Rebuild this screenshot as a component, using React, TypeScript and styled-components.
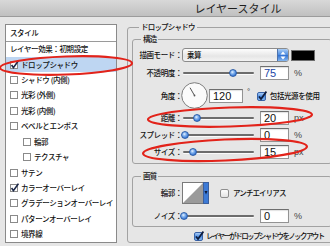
import React from "react";
import styled, { createGlobalStyle } from "styled-components";

const GlobalStyle = createGlobalStyle`
  * { box-sizing: border-box; }
  html, body { margin: 0; padding: 0; background: #e6e6e6; }
  body {
    font-family: "Noto Sans CJK JP", "Noto Sans", sans-serif;
    font-weight: 500;
    color: #111;
  }
`;

const Window = styled.div`
  position: relative;
  width: 330px;
  height: 246px;
  overflow: hidden;
  display: flex;
  flex-direction: column;
  background: #e6e6e6;
`;

const TitleBar = styled.div`
  flex: none;
  height: 17px;
  display: flex;
  align-items: center;
  justify-content: center;
  padding-left: 146px;
  background: linear-gradient(#d8d8d8, #c0c0c0);
  border-bottom: 1px solid #9c9c9c;
  font-size: 11px;
  font-weight: 400;
  line-height: 14px;
  color: #1e1e1e;
`;

const Body = styled.div`
  display: flex;
  align-items: flex-start;
  padding: 5px 0 0 5px;
`;

/* left: effect list */
const StylePanel = styled.div`
  flex: none;
  width: 112px;
  height: 219px;
  margin-top: 2px;
  display: flex;
  flex-direction: column;
  background: #fff;
  border: 1px solid #8a8a8a;
  font-size: 7.5px;
  line-height: 10px;
  letter-spacing: -0.4px;
`;

const PanelHeader = styled.div`
  height: 17px;
  display: flex;
  align-items: center;
  padding-left: 4px;
  border-bottom: 1px solid #9a9a9a;
`;

const PresetRow = styled.div`
  height: 15px;
  display: flex;
  align-items: center;
  padding-left: 4px;
`;

const EffectRow = styled.div<{ $indent?: boolean; $selected?: boolean }>`
  height: 15.5px;
  display: flex;
  align-items: center;
  gap: 2px;
  padding-left: ${(p) => (p.$indent ? 17 : 4)}px;
  background: ${(p) => (p.$selected ? "#bed6f2" : "transparent")};
  white-space: nowrap;
`;

/* right: settings */
const Group = styled.fieldset<{ $w: number; $ml?: number; $mt?: number; $h?: number; $pb?: number; $pl?: number }>`
  flex: none;
  width: ${(p) => p.$w}px;
  height: ${(p) => (p.$h ? `${p.$h}px` : "auto")};
  min-width: 0;
  margin: ${(p) => p.$mt ?? 0}px 0 0 ${(p) => p.$ml ?? 0}px;
  padding: 0 0 ${(p) => p.$pb ?? 0}px ${(p) => p.$pl ?? 0}px;
  border: 1px solid #a2a2a2;
  border-radius: 3px;
`;

const Legend = styled.legend<{ $ml: number }>`
  margin-left: ${(p) => p.$ml}px;
  padding: 0 2px;
  font-size: 7.5px;
  line-height: 10px;
  letter-spacing: -0.8px;
`;

const FieldRow = styled.div<{ $h?: number; $mt?: number; $ml?: number }>`
  display: flex;
  align-items: center;
  height: ${(p) => p.$h ?? 14}px;
  margin-top: ${(p) => p.$mt ?? 3}px;
  margin-left: ${(p) => p.$ml ?? 0}px;
  font-size: 7.5px;
  line-height: 10px;
  letter-spacing: -0.4px;
  white-space: nowrap;
`;

const FieldLabel = styled.span`
  flex: none;
  width: 49px;
  text-align: right;
`;

const ModeSelect = styled.div`
  flex: none;
  display: flex;
  align-items: center;
  width: 107px;
  height: 14px;
  padding-left: 4px;
  overflow: hidden;
  border: 1px solid #8b8b8b;
  border-radius: 3px;
  background: linear-gradient(#fdfdfd, #e6e6e6 60%, #f3f3f3);
`;

const Stepper = styled.span`
  margin-left: auto;
  width: 11px;
  height: 100%;
  display: flex;
  align-items: center;
  justify-content: center;
  background: linear-gradient(#a9cdf6, #4a8ae0 50%, #2e6fd2 51%, #86b8f0);
  border-left: 1px solid #4d73ad;
`;

const Swatch = styled.span`
  flex: none;
  width: 24px;
  height: 11px;
  margin-left: 2px;
  background: #000;
  border: 1px solid #6d6d6d;
`;

const Slider = styled.div<{ $ml?: number }>`
  position: relative;
  flex: none;
  width: 71px;
  height: 10px;
  margin-left: ${(p) => p.$ml ?? 1}px;

  &::before {
    content: "";
    position: absolute;
    left: 0;
    right: 0;
    top: 4px;
    height: 2px;
    border-radius: 1px;
    background: #6c6c6c;
    box-shadow: 0 1px 0 #fafafa;
  }
`;

const Thumb = styled.span<{ $pos: number }>`
  position: absolute;
  top: 1px;
  left: ${(p) => p.$pos}px;
  width: 8px;
  height: 8px;
  margin-left: -4px;
  border-radius: 50%;
  border: 1px solid #2d5ea8;
  background: radial-gradient(circle at 40% 35%, #e6f1ff 0, #7fb1ee 35%, #2f6fd0 80%);
`;

const NumberBox = styled.div<{ $w?: number; $ml?: number; $accent?: boolean }>`
  flex: none;
  width: ${(p) => p.$w ?? 29}px;
  height: 14px;
  margin-left: ${(p) => p.$ml ?? 6}px;
  padding-left: 3px;
  border: 1px solid #939393;
  border-top-color: #6e6e6e;
  background: #fff;
  box-shadow: inset 0 1px 1px rgba(0, 0, 0, 0.12);
  font: 400 11px/12px "Liberation Sans", Arial, sans-serif;
  letter-spacing: 0;
  color: ${(p) => (p.$accent ? "#2146a6" : "#111")};
`;

const Unit = styled.span<{ $ml?: number }>`
  margin-left: ${(p) => p.$ml ?? 5}px;
  font: 400 9px/10px "Liberation Sans", Arial, sans-serif;
  letter-spacing: 0;
  color: #444;
`;

const Degree = styled.span`
  align-self: flex-start;
  margin: 6px 0 0 4px;
  font: 400 8px/8px "Liberation Sans", Arial, sans-serif;
  color: #333;
`;

const CheckText = styled.span<{ $ml?: number; $tight?: number }>`
  margin-left: ${(p) => p.$ml ?? 3}px;
  letter-spacing: ${(p) => p.$tight ?? -0.4}px;
`;

const Overlay = styled.svg`
  position: absolute;
  left: 0;
  top: 0;
  pointer-events: none;
`;

const ListCheck = ({ checked }: { checked?: boolean }) => (
  <svg width="9" height="10" viewBox="0 0 9 10" style={{ flex: "none" }}>
    <rect x="0.5" y="1.5" width="7" height="7" fill="#fff" stroke="#8a8a8a" />
    {checked && <path d="M1.6 5 L3.4 7.6 L8.4 0.6" fill="none" stroke="#1b2747" strokeWidth="1.6" />}
  </svg>
);

const AquaCheck = ({ checked }: { checked?: boolean }) => (
  <svg width="10" height="10" viewBox="0 0 10 10" style={{ flex: "none" }}>
    <defs>
      <linearGradient id="aqOn" x1="0" y1="0" x2="0" y2="1">
        <stop offset="0" stopColor="#b7d6fa" />
        <stop offset="0.5" stopColor="#4f8fe3" />
        <stop offset="1" stopColor="#8bbcf2" />
      </linearGradient>
      <linearGradient id="aqOff" x1="0" y1="0" x2="0" y2="1">
        <stop offset="0" stopColor="#ffffff" />
        <stop offset="1" stopColor="#e2e2e2" />
      </linearGradient>
    </defs>
    <rect x="0.5" y="1.5" width="8" height="8" rx="1.5" fill={checked ? "url(#aqOn)" : "url(#aqOff)"} stroke={checked ? "#3a64a8" : "#8e8e8e"} />
    {checked && <path d="M2 5.4 L4 8 L9.4 0.6" fill="none" stroke="#0e1c3c" strokeWidth="1.7" />}
  </svg>
);

const Dial = ({ angle }: { angle: number }) => {
  const r = (angle * Math.PI) / 180;
  const x = 13.5 + Math.cos(r) * 9;
  const y = 13.5 - Math.sin(r) * 9;
  return (
    <svg width="27" height="27" viewBox="0 0 27 27" style={{ flex: "none", marginLeft: -1 }}>
      <circle cx="13.5" cy="13.5" r="12.8" fill="#fbfbfb" stroke="#7c7c7c" />
      <line x1="13.5" y1="13.5" x2={x} y2={y} stroke="#555" strokeWidth="1" />
      <circle cx="13.5" cy="13.5" r="0.9" fill="#555" />
    </svg>
  );
};

const StepArrows = () => (
  <svg width="6" height="9" viewBox="0 0 6 9">
    <path d="M3 0.5 L5.5 3.5 H0.5 Z M3 8.5 L5.5 5.5 H0.5 Z" fill="#fff" />
  </svg>
);

const ContourSwatch = () => (
  <svg width="27" height="22" viewBox="0 0 27 22" style={{ flex: "none" }}>
    <rect x="0.5" y="0.5" width="21" height="21" fill="#fff" stroke="#7a7a7a" />
    <path d="M1 21 L21 1 V21 Z" fill="#9a9a9a" />
    <rect x="21.5" y="0.5" width="5" height="21" fill="#3c7ad6" stroke="#3a5f9e" />
    <path d="M22.5 9 H25.5 L24 12.5 Z" fill="#0e1c3c" />
  </svg>
);

const effects = [
  { label: "ドロップシャドウ", checked: true, selected: true },
  { label: "シャドウ (内側)" },
  { label: "光彩 (外側)" },
  { label: "光彩 (内側)" },
  { label: "ベベルとエンボス" },
  { label: "輪郭", indent: true },
  { label: "テクスチャ", indent: true },
  { label: "サテン" },
  { label: "カラーオーバーレイ", checked: true },
  { label: "グラデーションオーバーレイ" },
  { label: "パターンオーバーレイ" },
  { label: "境界線" },
];

const App = () => (
  <Window>
    <GlobalStyle />
    <TitleBar>レイヤースタイル</TitleBar>
    <Body>
      <StylePanel>
        <PanelHeader>スタイル</PanelHeader>
        <PresetRow>レイヤー効果：初期設定</PresetRow>
        {effects.map((e) => (
          <EffectRow key={e.label} $indent={e.indent} $selected={e.selected}>
            <ListCheck checked={e.checked} />
            {e.label}
          </EffectRow>
        ))}
      </StylePanel>

      <Group $w={215} $ml={10} $h={221} $pl={4}>
        <Legend $ml={7}>ドロップシャドウ</Legend>

        <Group $w={200} $mt={2} $pb={4}>
          <Legend $ml={8}>構造</Legend>
          <FieldRow $mt={4}>
            <FieldLabel>描画モード：</FieldLabel>
            <ModeSelect>
              乗算
              <Stepper>
                <StepArrows />
              </Stepper>
            </ModeSelect>
            <Swatch />
          </FieldRow>
          <FieldRow $mt={4}>
            <FieldLabel>不透明度：</FieldLabel>
            <Slider>
              <Thumb $pos={50} />
            </Slider>
            <NumberBox $accent>75</NumberBox>
            <Unit>%</Unit>
          </FieldRow>
          <FieldRow $h={27} $mt={2}>
            <FieldLabel>角度：</FieldLabel>
            <Dial angle={120} />
            <NumberBox $w={34} $ml={1}>120</NumberBox>
            <Degree>°</Degree>
            <span style={{ marginLeft: 7, display: "flex" }}>
              <AquaCheck checked />
            </span>
            <CheckText>包括光源を使用</CheckText>
          </FieldRow>
          <FieldRow $mt={2}>
            <FieldLabel>距離：</FieldLabel>
            <Slider>
              <Thumb $pos={14} />
            </Slider>
            <NumberBox>20</NumberBox>
            <Unit>px</Unit>
          </FieldRow>
          <FieldRow>
            <FieldLabel>スプレッド：</FieldLabel>
            <Slider>
              <Thumb $pos={2} />
            </Slider>
            <NumberBox>0</NumberBox>
            <Unit>%</Unit>
          </FieldRow>
          <FieldRow>
            <FieldLabel>サイズ：</FieldLabel>
            <Slider>
              <Thumb $pos={10} />
            </Slider>
            <NumberBox>15</NumberBox>
            <Unit>px</Unit>
          </FieldRow>
        </Group>

        <Group $w={200} $mt={7} $pb={3}>
          <Legend $ml={8}>画質</Legend>
          <FieldRow $h={22} $mt={1}>
            <FieldLabel>輪郭：</FieldLabel>
            <ContourSwatch />
            <span style={{ marginLeft: 11, display: "flex" }}>
              <AquaCheck />
            </span>
            <CheckText $tight={-0.9}>アンチエイリアス</CheckText>
          </FieldRow>
          <FieldRow $mt={5}>
            <FieldLabel>ノイズ：</FieldLabel>
            <Slider>
              <Thumb $pos={1} />
            </Slider>
            <NumberBox>0</NumberBox>
            <Unit>%</Unit>
          </FieldRow>
        </Group>

        <FieldRow $h={11} $mt={3} $ml={62}>
          <AquaCheck checked />
          <CheckText $ml={2} $tight={-1.6}>レイヤーがドロップシャドウをノックアウト</CheckText>
        </FieldRow>
      </Group>
    </Body>

    <Overlay width="330" height="246" viewBox="0 0 330 246">
      <g fill="none" stroke="#e2231a" strokeWidth="2.2">
        <ellipse cx="66" cy="65.5" rx="66" ry="9" transform="rotate(-2 66 65.5)" />
        <ellipse cx="230" cy="117" rx="82" ry="9.5" transform="rotate(-1.7 230 117)" />
        <ellipse cx="225" cy="150" rx="82" ry="10.5" transform="rotate(-2.5 225 150)" />
      </g>
    </Overlay>
  </Window>
);

export default App;
